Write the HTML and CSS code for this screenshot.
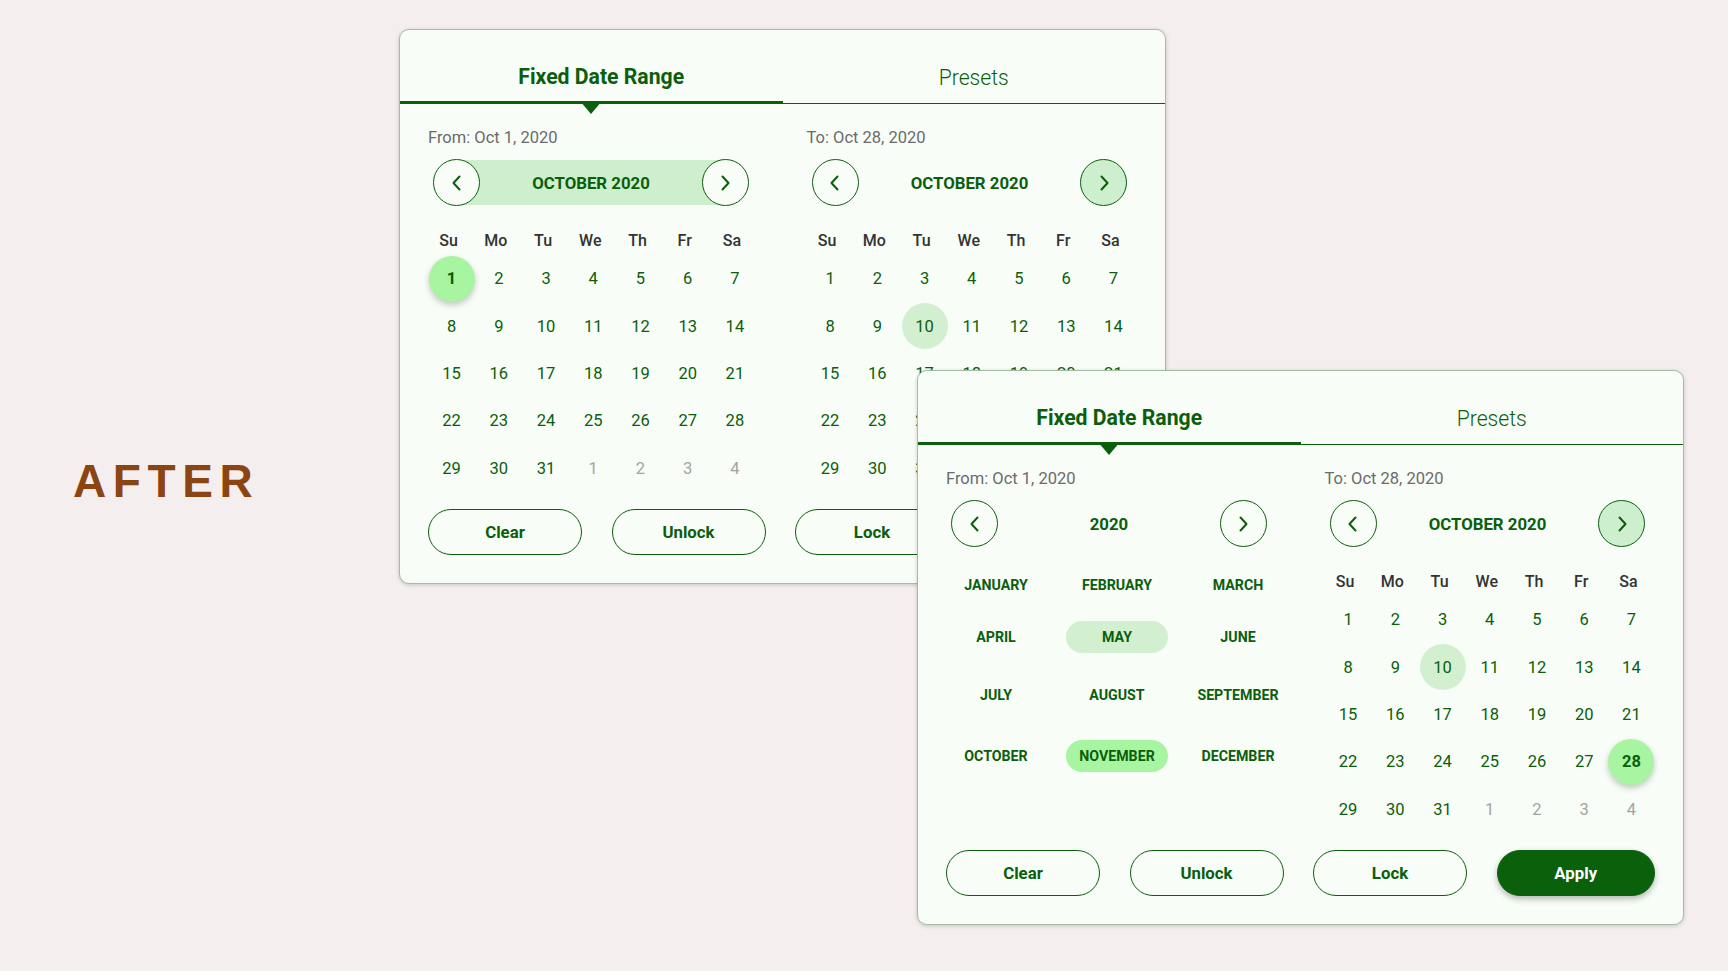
FILE: index.html
```html
<!DOCTYPE html>
<html lang="en">
<head>
<meta charset="utf-8">
<title>Date Range Picker</title>
<link rel="stylesheet" href="styles.css">
</head>
<body>
<div class="stage">
  <h1 class="after-label">AFTER</h1>

  <section class="card card-back">
    <div class="tabs">
      <div class="tab tab-active">Fixed Date Range</div>
      <div class="tab">Presets</div>
    </div>
    <div class="card-body">
      <div class="cols">
        <div class="col">
          <p class="range-label">From: Oct 1, 2020</p>
          <div class="nav nav-band">
            <span class="circle"><svg width="24" height="24" viewBox="0 0 24 24"><path d="M14.5 5.5 L8.5 12 L14.5 18.5" fill="none" stroke="#0b5e0b" stroke-width="2" stroke-linecap="round" stroke-linejoin="round"/></svg></span>
            <span class="nav-title">OCTOBER 2020</span>
            <span class="circle"><svg width="24" height="24" viewBox="0 0 24 24"><path d="M9.5 5.5 L15.5 12 L9.5 18.5" fill="none" stroke="#0b5e0b" stroke-width="2" stroke-linecap="round" stroke-linejoin="round"/></svg></span>
          </div>
          <div class="weekdays"><span>Su</span><span>Mo</span><span>Tu</span><span>We</span><span>Th</span><span>Fr</span><span>Sa</span></div>
          <div class="days">
            <span class="day day-selected">1</span><span class="day">2</span><span class="day">3</span><span class="day">4</span><span class="day">5</span><span class="day">6</span><span class="day">7</span>
            <span class="day">8</span><span class="day">9</span><span class="day">10</span><span class="day">11</span><span class="day">12</span><span class="day">13</span><span class="day">14</span>
            <span class="day">15</span><span class="day">16</span><span class="day">17</span><span class="day">18</span><span class="day">19</span><span class="day">20</span><span class="day">21</span>
            <span class="day">22</span><span class="day">23</span><span class="day">24</span><span class="day">25</span><span class="day">26</span><span class="day">27</span><span class="day">28</span>
            <span class="day">29</span><span class="day">30</span><span class="day">31</span><span class="day day-other">1</span><span class="day day-other">2</span><span class="day day-other">3</span><span class="day day-other">4</span>
          </div>
        </div>
        <div class="col">
          <p class="range-label">To: Oct 28, 2020</p>
          <div class="nav">
            <span class="circle"><svg width="24" height="24" viewBox="0 0 24 24"><path d="M14.5 5.5 L8.5 12 L14.5 18.5" fill="none" stroke="#0b5e0b" stroke-width="2" stroke-linecap="round" stroke-linejoin="round"/></svg></span>
            <span class="nav-title">OCTOBER 2020</span>
            <span class="circle circle-fill"><svg width="24" height="24" viewBox="0 0 24 24"><path d="M9.5 5.5 L15.5 12 L9.5 18.5" fill="none" stroke="#0b5e0b" stroke-width="2" stroke-linecap="round" stroke-linejoin="round"/></svg></span>
          </div>
          <div class="weekdays"><span>Su</span><span>Mo</span><span>Tu</span><span>We</span><span>Th</span><span>Fr</span><span>Sa</span></div>
          <div class="days">
            <span class="day">1</span><span class="day">2</span><span class="day">3</span><span class="day">4</span><span class="day">5</span><span class="day">6</span><span class="day">7</span>
            <span class="day">8</span><span class="day">9</span><span class="day day-today">10</span><span class="day">11</span><span class="day">12</span><span class="day">13</span><span class="day">14</span>
            <span class="day">15</span><span class="day">16</span><span class="day">17</span><span class="day">18</span><span class="day">19</span><span class="day">20</span><span class="day">21</span>
            <span class="day">22</span><span class="day">23</span><span class="day">24</span><span class="day">25</span><span class="day">26</span><span class="day">27</span><span class="day">28</span>
            <span class="day">29</span><span class="day">30</span><span class="day">31</span><span class="day day-other">1</span><span class="day day-other">2</span><span class="day day-other">3</span><span class="day day-other">4</span>
          </div>
        </div>
      </div>
      <div class="actions">
        <button class="btn">Clear</button>
        <button class="btn">Unlock</button>
        <button class="btn">Lock</button>
        <button class="btn btn-primary">Apply</button>
      </div>
    </div>
  </section>

  <section class="card card-front">
    <div class="tabs">
      <div class="tab tab-active">Fixed Date Range</div>
      <div class="tab">Presets</div>
    </div>
    <div class="card-body">
      <div class="cols">
        <div class="col">
          <p class="range-label">From: Oct 1, 2020</p>
          <div class="nav">
            <span class="circle"><svg width="24" height="24" viewBox="0 0 24 24"><path d="M14.5 5.5 L8.5 12 L14.5 18.5" fill="none" stroke="#0b5e0b" stroke-width="2" stroke-linecap="round" stroke-linejoin="round"/></svg></span>
            <span class="nav-title">2020</span>
            <span class="circle"><svg width="24" height="24" viewBox="0 0 24 24"><path d="M9.5 5.5 L15.5 12 L9.5 18.5" fill="none" stroke="#0b5e0b" stroke-width="2" stroke-linecap="round" stroke-linejoin="round"/></svg></span>
          </div>
          <div class="months">
            <span class="month">JANUARY</span><span class="month">FEBRUARY</span><span class="month">MARCH</span>
            <span class="month">APRIL</span><span class="month month-soft">MAY</span><span class="month">JUNE</span>
            <span class="month">JULY</span><span class="month">AUGUST</span><span class="month">SEPTEMBER</span>
            <span class="month">OCTOBER</span><span class="month month-selected">NOVEMBER</span><span class="month">DECEMBER</span>
          </div>
        </div>
        <div class="col">
          <p class="range-label">To: Oct 28, 2020</p>
          <div class="nav">
            <span class="circle"><svg width="24" height="24" viewBox="0 0 24 24"><path d="M14.5 5.5 L8.5 12 L14.5 18.5" fill="none" stroke="#0b5e0b" stroke-width="2" stroke-linecap="round" stroke-linejoin="round"/></svg></span>
            <span class="nav-title">OCTOBER 2020</span>
            <span class="circle circle-fill"><svg width="24" height="24" viewBox="0 0 24 24"><path d="M9.5 5.5 L15.5 12 L9.5 18.5" fill="none" stroke="#0b5e0b" stroke-width="2" stroke-linecap="round" stroke-linejoin="round"/></svg></span>
          </div>
          <div class="weekdays"><span>Su</span><span>Mo</span><span>Tu</span><span>We</span><span>Th</span><span>Fr</span><span>Sa</span></div>
          <div class="days">
            <span class="day">1</span><span class="day">2</span><span class="day">3</span><span class="day">4</span><span class="day">5</span><span class="day">6</span><span class="day">7</span>
            <span class="day">8</span><span class="day">9</span><span class="day day-today">10</span><span class="day">11</span><span class="day">12</span><span class="day">13</span><span class="day">14</span>
            <span class="day">15</span><span class="day">16</span><span class="day">17</span><span class="day">18</span><span class="day">19</span><span class="day">20</span><span class="day">21</span>
            <span class="day">22</span><span class="day">23</span><span class="day">24</span><span class="day">25</span><span class="day">26</span><span class="day">27</span><span class="day day-selected">28</span>
            <span class="day">29</span><span class="day">30</span><span class="day">31</span><span class="day day-other">1</span><span class="day day-other">2</span><span class="day day-other">3</span><span class="day day-other">4</span>
          </div>
        </div>
      </div>
      <div class="actions">
        <button class="btn">Clear</button>
        <button class="btn">Unlock</button>
        <button class="btn">Lock</button>
        <button class="btn btn-primary">Apply</button>
      </div>
    </div>
  </section>
</div>
</body>
</html>
```

FILE: styles.css
```css
* { box-sizing: border-box; }
html, body { margin: 0; padding: 0; }
body {
  width: 1728px;
  height: 971px;
  overflow: hidden;
  background: #f4eeee;
  font-family: Roboto, "Noto Sans", sans-serif;
}
.stage { position: relative; width: 1728px; height: 971px; }

.after-label {
  position: absolute;
  left: 73px;
  top: 458px;
  margin: 0;
  font-family: "Liberation Sans", Arial, sans-serif;
  font-weight: 700;
  font-size: 46px;
  line-height: 46px;
  letter-spacing: 6.6px;
  color: #8b4513;
}

.card {
  position: absolute;
  width: 767px;
  height: 555px;
  background: #f8fdf7;
  border: 1px solid #a3bca3;
  border-radius: 10px;
  box-shadow: 0 1px 4px rgba(0, 0, 0, 0.18);
  display: flex;
  flex-direction: column;
}
.card-back { left: 399px; top: 29px; }
.card-front { left: 917px; top: 370px; }

.tabs {
  display: grid;
  grid-template-columns: 1fr 1fr;
  height: 74px;
  flex: none;
}
.tab {
  position: relative;
  display: flex;
  justify-content: center;
  align-items: flex-end;
  padding-bottom: 13px;
  font-size: 21.2px;
  line-height: 24px;
  font-weight: 300;
  color: #0b5e0b;
  border-bottom: 1px solid #0b5e0b;
}
.tab-active {
  font-weight: 700;
  border-bottom: 3px solid #0b5e0b;
  padding-bottom: 12px;
  padding-left: 20px;
}
.tab-active::after {
  content: "";
  position: absolute;
  left: 50%;
  top: 100%;
  transform: translateX(-50%);
  border-left: 11px solid transparent;
  border-right: 11px solid transparent;
  border-top: 13px solid #0b5e0b;
}

.card-body {
  padding: 24px 28px 0;
  display: flex;
  flex-direction: column;
}
.cols {
  display: grid;
  grid-template-columns: minmax(0, 1fr) minmax(0, 1fr);
  column-gap: 48px;
  align-items: start;
  height: 364px;
}
.range-label {
  margin: 0 0 12px;
  font-size: 16.5px;
  line-height: 19px;
  color: #6b6b6b;
}
.nav {
  width: 316px;
  margin-left: 5px;
  height: 47px;
  display: flex;
  justify-content: space-between;
  align-items: center;
}
.nav-band {
  background: linear-gradient(#cdefcd, #cdefcd) center / calc(100% - 47px) 45px no-repeat;
}
.nav-title {
  font-size: 16.8px;
  font-weight: 700;
  color: #0b5e0b;
}
.circle {
  width: 47px;
  height: 47px;
  border-radius: 50%;
  border: 1px solid #0b5e0b;
  background: #f8fdf7;
  display: flex;
  align-items: center;
  justify-content: center;
}
.circle-fill { background: #cdefcd; }

.weekdays {
  display: grid;
  grid-template-columns: repeat(7, 1fr);
  height: 29px;
  margin: 20px 3px 0 -3px;
  align-items: center;
  justify-items: center;
  font-size: 16px;
  font-weight: 500;
  color: #333;
}
.days {
  display: grid;
  grid-template-columns: repeat(7, 1fr);
  grid-auto-rows: 47.4px;
  justify-items: center;
  align-items: center;
}
.day {
  width: 46px;
  height: 46px;
  border-radius: 50%;
  display: flex;
  align-items: center;
  justify-content: center;
  font-size: 16.5px;
  color: #0b5e0b;
}
.day-selected {
  background: #a8f5a1;
  font-weight: 700;
  box-shadow: 0 3px 6px rgba(0, 0, 0, 0.22);
}
.day-today { background: #d2f0d0; }
.day-other { color: #a3a3a3; }

.months {
  display: grid;
  grid-template-columns: repeat(3, 102px);
  grid-template-rows: 52px 52px 64px 58px;
  column-gap: 19px;
  margin: 12px 0 0 -1px;
  align-items: center;
  justify-items: center;
}
.month {
  width: 102px;
  height: 32px;
  border-radius: 16px;
  display: flex;
  align-items: center;
  justify-content: center;
  font-size: 14.2px;
  font-weight: 700;
  color: #0b5e0b;
}
.month-soft { background: #d2f0d0; }
.month-selected { background: #a8f5a1; }

.actions {
  display: grid;
  grid-template-columns: repeat(3, 154px) 1fr;
  column-gap: 29.5px;
  margin-top: 16.5px;
}
.btn {
  height: 46px;
  border-radius: 23px;
  border: 1px solid #0b5e0b;
  background: transparent;
  font-family: Roboto, "Noto Sans", sans-serif;
  font-size: 16.8px;
  font-weight: 700;
  color: #0b5e0b;
  padding: 0;
}
.btn-primary {
  background: #0b600b;
  border-color: #0b600b;
  color: #ffffff;
  box-shadow: 0 3px 6px rgba(0, 0, 0, 0.28);
}
```
